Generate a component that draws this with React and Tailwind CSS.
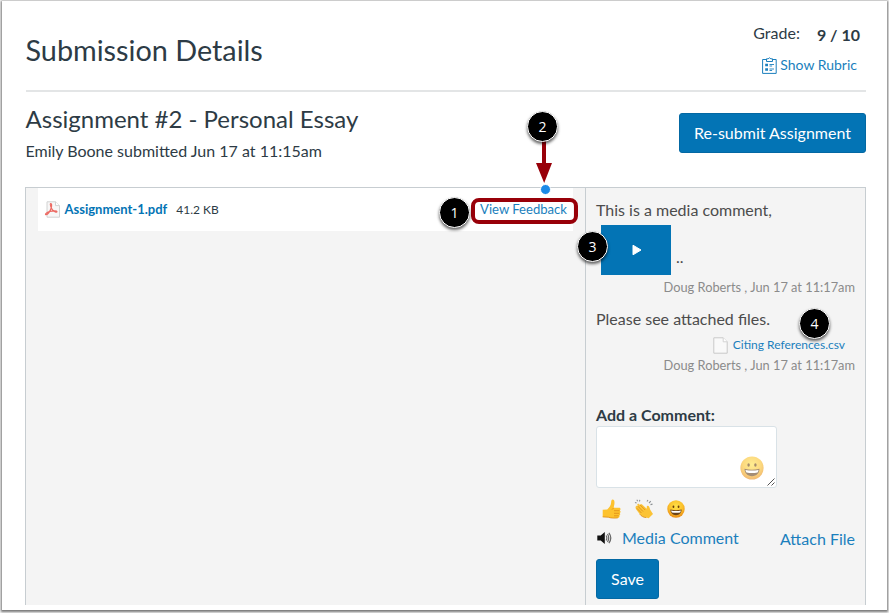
function RubricIcon() {
  return (
    <svg width="15" height="17" viewBox="0 0 15 17" fill="none" stroke="#1b7fbd" className="shrink-0">
      <path d="M4 2.500H.6v13.900h13.600V2.500H11" />
      <path d="M4.500 4.500V1.800h1.600Q7.500-.2 8.900 1.800h1.600v2.700z" />
      <path d="M7.500 7.500H12M7.500 9h2.600M7.500 12H12M7.500 13.500h2.600" strokeWidth=".9" />
      <path d="M3.200 6.800H6v2.400H3.200zM3.200 11.300H6v2.400H3.200z" fill="#1b7fbd" stroke="none" />
    </svg>
  );
}

function PdfIcon() {
  return (
    <svg width="17" height="17" viewBox="0 0 17 17" fill="none" className="shrink-0">
      <path d="M3 .8h8.500l4 3.800v11.600H3z" fill="#f7f7f7" stroke="#d2d2d2" />
      <path d="M11.500.8v3.800h4" fill="#fff" stroke="#d2d2d2" />
      <path
        d="M6.600 2.600c1.200-.5 1.300 2.100.5 4.700-.9 2.800-3.300 6.600-5 6.400-1.900-.3 1-2.600 4-3.300 3-.8 6.800-.9 6.900.2.1 1.200-3.100.3-4.700-2C7 6.800 5.700 3.100 6.600 2.600z"
        stroke="#ec6a63"
        strokeWidth="1.200"
      />
    </svg>
  );
}

function FileIcon() {
  return (
    <svg width="15" height="17" viewBox="0 0 15 17" className="shrink-0">
      <path d="M.8.8h9.400l4 4v11.400H.8z" fill="#f9f9f9" stroke="#c9c9c9" />
      <path d="M10.200.8v4h4" fill="#fff" stroke="#d2d2d2" />
    </svg>
  );
}

function SpeakerIcon() {
  return (
    <svg width="16" height="14" viewBox="0 0 16 14" fill="none" className="shrink-0">
      <path d="M1.300 4.600h3.400L8.800 1v12L4.700 9.400H1.300z" fill="#111" />
      <path
        d="M10.100 4.500q1.500 2.500 0 5M11.500 3q2.500 4 0 8M12.900 1.800q3.800 5.200 0 10.400"
        stroke="#666"
        strokeWidth="1.200"
      />
    </svg>
  );
}

function Grin({ size, className = "" }) {
  return (
    <svg width={size} height={size} viewBox="0 0 24 24" className={className}>
      <defs>
        <radialGradient id="grin" cx=".5" cy=".35" r=".65">
          <stop offset="0" stopColor="#ffe24a" />
          <stop offset=".6" stopColor="#fbc02a" />
          <stop offset="1" stopColor="#e88a14" />
        </radialGradient>
      </defs>
      <circle cx="12" cy="12" r="11.600" fill="url(#grin)" />
      <ellipse cx="8.600" cy="9" rx="1.200" ry="1.800" fill="#6b3f0a" />
      <ellipse cx="15.400" cy="9" rx="1.200" ry="1.800" fill="#6b3f0a" />
      <path d="M4.500 12.800q7.500 1.800 15 0c0 4.400-3 7.400-7.500 7.400s-7.500-3-7.500-7.400z" fill="#69421a" />
      <path d="M5.500 13.900q6.500 1.400 13 0-.2 1.600-1 2.700-5.500 1-11 0-.8-1.100-1-2.700z" fill="#fff" />
    </svg>
  );
}

function ThumbsUp() {
  return (
    <svg width="19" height="20" viewBox="0 0 19 20">
      <path
        d="M.7 10.800l4.500-.3c2-1.600 3.700-4.200 3.900-6.700C9.200 1.500 9.700.6 10.600.6c1.900 0 2.400 2.600 1.400 6.500l-.3 1.600h5.400c1.800 0 1.900 2.300.6 2.700 1.300.5 1.100 2.500-.1 2.700 1 .6.7 2.300-.4 2.500.7.9.1 2.200-1.400 2.300-3.600.4-7.400.2-9.500-.7L.7 17.900z"
        fill="#fdc22d"
      />
      <path
        d="M11.700 8.900l-1.600 1.600M12 11.700h5.500M12 14.300h5.300M12 16.800h4.700M.7 17.900l5.600.3c2.100.9 5.900 1.100 9.500.7"
        fill="none"
        stroke="#dd8b16"
        strokeWidth=".8"
      />
    </svg>
  );
}

function Clap() {
  return (
    <svg width="20" height="20" viewBox="0 0 20 20" fill="none">
      <path
        d="M2 7.300c.5-.8 1.300-.6 1.900 0l-.6-1.200c-.3-1.400 1-1.800 1.800-.9l1 .8c0-1.200 1.200-1.400 2-.5l4.600 4.200c.3-1.500-.3-2.800.8-3 1.500-.2 2.200 1.800 2.700 4l2.800 4.200-4.300 4.300-2.400-.6c-3-.1-5.100-1.600-6.500-3.400l-3.700-5c-.7-1-.8-2.100-.1-2.900z"
        fill="#fbc336"
      />
      <path
        d="M4 7.300l5 5.200M6.200 6l5 5M2.900 9.300L7.400 14M5.800 15.200c1.400 1.800 3.500 3.300 6.500 3.400"
        stroke="#d88b1d"
        strokeWidth=".8"
      />
      <path
        d="M1 3.500l1.600.6M2.800.8l1 1.500M5.800.8l-.3 1.700M13 2.500l1-1.500M15 4l1.800-1.800M16.500 5.600l2-.5"
        stroke="#8d9295"
        strokeWidth="1.100"
      />
    </svg>
  );
}

function Marker({ n, className }) {
  return (
    <div
      className={`absolute flex size-[31px] items-center justify-center rounded-full border border-white bg-black text-[14px] leading-none text-white shadow-[0_2px_3px_rgba(0,0,0,0.6)] font-['Open_Sans',sans-serif] ${className}`}
    >
      {n}
    </div>
  );
}

function Byline() {
  return (
    <div className="pr-[10px] text-right text-[12.8px] leading-5 text-[#8b8b8b]">
      Doug Roberts , Jun 17 at 11:17am
    </div>
  );
}

function Header() {
  return (
    <header className="flex h-[91px] justify-between border-b-2 border-[#e3e5e6]">
      <h1 className="pt-[31px] text-[28.8px] leading-[36px]">Submission Details</h1>
      <div className="pt-[22px]">
        <div className="flex justify-end gap-[17px] pr-[6px] text-base leading-5">
          <span>Grade:</span>
          <b className="pt-[2px]">9 / 10</b>
        </div>
        <a className="mt-[10px] flex items-center justify-end gap-[3px] pr-[9px] text-[14px] leading-5 text-[#1b7fbd]">
          <RubricIcon />
          Show Rubric
        </a>
      </div>
    </header>
  );
}

function Comments() {
  return (
    <aside className="w-[281px] shrink-0 border-x border-[#c7cdd1] pl-[10px] text-[#4c4c4c]">
      <p className="pt-[12px] text-base leading-5">This is a media comment,</p>
      <div className="mt-[5px] flex items-end gap-[5px] pl-[5px]">
        <button className="flex h-[50px] w-[70px] items-center justify-center bg-[#0374b5]">
          <svg width="10" height="12" viewBox="0 0 10 12" className="ml-[2px]">
            <path d="M1 1.200v9.600L9 6z" fill="#fff" stroke="#fff" strokeLinejoin="round" />
          </svg>
        </button>
        <span className="pb-[8px] text-base leading-5">..</span>
      </div>
      <div className="mt-[2px]">
        <Byline />
      </div>
      <p className="mt-[12px] text-base leading-5">Please see attached files.</p>
      <div className="mt-[7px] flex items-center justify-end gap-[5px] pr-[20px] text-[12px] leading-[18px] text-[#1b7fbd]">
        <FileIcon />
        Citing References.csv
      </div>
      <div className="mt-px">
        <Byline />
      </div>
      <label className="mt-[30px] block text-base leading-5 font-bold text-[#2d3b45]">Add a Comment:</label>
      <div className="relative mt-px h-[62px] w-[181px] rounded-[3px] border border-[#d9e2e7] bg-white">
        <Grin size={24} className="absolute right-[12px] bottom-[7px] opacity-60" />
        <svg width="8" height="8" viewBox="0 0 8 8" className="absolute right-px bottom-px">
          <path d="M.5 7.500l7-7M4.500 7.500l3-3" stroke="#555" />
        </svg>
      </div>
      <div className="mt-[11px] flex items-center gap-[13px] pl-[6px]">
        <ThumbsUp />
        <Clap />
        <Grin size={18} />
      </div>
      <div className="mt-[8px] flex items-center pr-[10px] text-base leading-5 text-[#1b7fbd]">
        <SpeakerIcon />
        <a className="ml-[10px]">Media Comment</a>
        <a className="mt-[2px] ml-auto">Attach File</a>
      </div>
      <button className="mt-[10px] h-[40px] w-[63px] rounded-[3px] border border-[#0368a3] bg-[#0374b5] text-base text-white">
        Save
      </button>
    </aside>
  );
}

export default function App() {
  return (
    <div className="h-[613px] overflow-hidden bg-[#f4f4f4] pt-px pl-[2px] font-[Lato,sans-serif] whitespace-nowrap text-[#2d3b45]">
      <div className="relative h-[609px] w-[885px] bg-white pr-[21px] pl-[23.500px] shadow-[0_1px_2px_1px_rgba(0,0,0,0.5)]">
        <Header />
        <section className="flex h-[95px] justify-between">
          <div className="pt-[12px]">
            <h2 className="text-2xl leading-[30px]">Assignment #2 - Personal Essay</h2>
            <p className="mt-[7px] text-base leading-5">Emily Boone submitted Jun 17 at 11:15am</p>
          </div>
          <button className="mt-[21px] h-[40px] w-[187px] rounded-[3px] border border-[#0368a3] bg-[#0374b5] text-base text-white">
            Re-submit Assignment
          </button>
        </section>
        <main className="-ml-[0.5px] flex h-[418px] border-t border-l border-[#c7cdd1] bg-[#f4f4f4]">
          <div className="flex-1 px-[12px]">
            <div className="flex h-[43px] items-center bg-white pl-[6px] text-[12px]">
              <PdfIcon />
              <a className="ml-[3.500px] text-[13px] font-bold text-[#0374b5]">Assignment-1.pdf</a>
              <span className="ml-[9px]">41.2 KB</span>
              <a className="mr-[6px] ml-auto text-[13.100px] text-[#1b7fbd]">View Feedback</a>
            </div>
          </div>
          <Comments />
        </main>

        <div className="absolute top-[197px] left-[469px] h-[26px] w-[107px] rounded-[8px] border-4 border-[#980009]" />
        <div className="absolute top-[183px] left-[538px] size-[11px] rounded-full border border-white bg-[#1a8ae8]" />
        <svg width="16" height="42" viewBox="0 0 16 42" className="absolute top-[140px] left-[534px]">
          <path d="M6 0h4v22h6L8.200 42 0 22h6z" fill="#980009" />
        </svg>
        <Marker n="1" className="top-[196px] left-[437px]" />
        <Marker n="2" className="top-[110px] left-[525px]" />
        <Marker n="3" className="top-[230px] left-[575px]" />
        <Marker n="4" className="top-[307px] left-[797px]" />
      </div>
    </div>
  );
}
